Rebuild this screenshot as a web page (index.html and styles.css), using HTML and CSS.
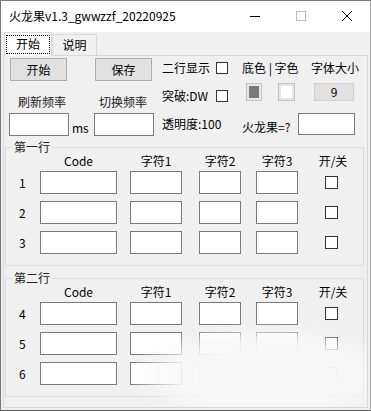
FILE: index.html
```html
<!DOCTYPE html>
<html lang="zh-CN">

<head>
    <meta charset="UTF-8">
    <title>火龙果v1.3_gwwzzf_20220925</title>
    <link rel="stylesheet" href="styles.css">
</head>

<body>

    <div class="window">
        <!-- Title bar -->
        <div class="titlebar">
            <span class="title">火龙果v1.3_gwwzzf_20220925</span>
            <div class="controls">
                <span class="ctl"><svg width="10" height="10" viewBox="0 0 10 10"><path d="M0 5.5h10" stroke="#000" stroke-width="1"/></svg></span>
                <span class="ctl"><svg width="10" height="10" viewBox="0 0 10 10"><rect x="0.5" y="0.5" width="9" height="9" fill="none" stroke="#bbb" stroke-width="1"/></svg></span>
                <span class="ctl"><svg width="10" height="10" viewBox="0 0 10 10"><path d="M0 0L10 10M10 0L0 10" stroke="#000" stroke-width="1"/></svg></span>
            </div>
        </div>

        <!-- Tabs -->
        <div class="tabs">
            <div class="tab active"><span class="focus">开始</span></div>
            <div class="tab">说明</div>
        </div>

        <div class="page">
            <div class="top">
                <div class="left">
                    <button class="btn b1">开始</button>
                    <button class="btn b2">保存</button>
                    <span class="cap c1">刷新频率</span>
                    <span class="cap c2">切换频率</span>
                    <input class="box i1" type="text">
                    <span class="ms">ms</span>
                    <input class="box i2" type="text">
                </div>

                <div class="mid">
                    <div class="opt"><span>二行显示</span><span class="check"></span></div>
                    <div class="opt"><span>突破:DW</span><span class="check"></span></div>
                    <div class="opt"><span>透明度:100</span></div>
                </div>

                <div class="right">
                    <div class="rrow head">
                        <span class="colors">底色 | 字色</span>
                        <span>字体大小</span>
                    </div>
                    <div class="rrow swatches">
                        <span class="swatch grey"></span>
                        <span class="swatch white"></span>
                        <button class="btn size">9</button>
                    </div>
                    <div class="rrow ask">
                        <span class="ask-label">火龙果=?</span>
                        <input class="box ask-input" type="text">
                    </div>
                </div>
            </div>

            <!-- Row groups -->
            <fieldset class="group first">
                <legend>第一行</legend>
                <div class="grid">
                    <span></span>
                    <span class="hd code">Code</span>
                    <span class="hd s1">字符1</span>
                    <span class="hd s2">字符2</span>
                    <span class="hd s3">字符3</span>
                    <span class="hd sw">开/关</span>

                    <span class="num">1</span>
                    <input class="box code" type="text"><input class="box s1" type="text"><input class="box s2" type="text"><input class="box s3" type="text"><span class="check sw"></span>

                    <span class="num">2</span>
                    <input class="box code" type="text"><input class="box s1" type="text"><input class="box s2" type="text"><input class="box s3" type="text"><span class="check sw"></span>

                    <span class="num">3</span>
                    <input class="box code" type="text"><input class="box s1" type="text"><input class="box s2" type="text"><input class="box s3" type="text"><span class="check sw"></span>
                </div>
            </fieldset>

            <fieldset class="group second">
                <legend>第二行</legend>
                <div class="grid">
                    <span></span>
                    <span class="hd code">Code</span>
                    <span class="hd s1">字符1</span>
                    <span class="hd s2">字符2</span>
                    <span class="hd s3">字符3</span>
                    <span class="hd sw">开/关</span>

                    <span class="num">4</span>
                    <input class="box code" type="text"><input class="box s1" type="text"><input class="box s2" type="text"><input class="box s3" type="text"><span class="check sw"></span>

                    <span class="num">5</span>
                    <input class="box code" type="text"><input class="box s1" type="text"><input class="box s2" type="text"><input class="box s3" type="text"><span class="check sw"></span>

                    <span class="num">6</span>
                    <input class="box code" type="text"><input class="box s1" type="text"><input class="box s2" type="text"><input class="box s3" type="text"><span class="check sw"></span>
                </div>
            </fieldset>

            <!-- washed-out spot over the lower right of the capture -->
            <div class="glare"></div>
        </div>
    </div>

</body>

</html>
```

FILE: styles.css
```css
/* Reset */
* {
    box-sizing: border-box;
    margin: 0;
    padding: 0;
}

body {
    width: 371px;
    height: 411px;
    background: #f0f0f0;
    font-family: "Noto Sans CJK SC", "Noto Sans", sans-serif;
    font-size: 12px;
    color: #000;
    overflow: hidden;
}

/* Window frame */
.window {
    display: flex;
    flex-direction: column;
    width: 371px;
    height: 411px;
    border: 1px solid #7a7a7a;
    border-right-color: #a8a8a8;
    border-bottom-color: #5a5a5a;
    background: #f0f0f0;
}

.titlebar {
    display: flex;
    align-items: center;
    height: 31px;
    background: #fff;
    padding-bottom: 1px;
}

.title {
    padding-left: 8px;
    font-size: 12px;
    line-height: 16px;
}

.controls {
    display: flex;
    margin-left: auto;
    height: 100%;
}

.ctl {
    display: flex;
    align-items: center;
    justify-content: center;
    width: 46px;
}

.ctl svg {
    display: block;
}

/* Tabs */
.tabs {
    display: flex;
    align-items: flex-end;
    height: 23px;
    padding-left: 3px;
    position: relative;
    z-index: 1;
}

.tab {
    display: flex;
    align-items: center;
    justify-content: center;
    width: 45px;
    height: 21px;
    border: 1px solid #d9d9d9;
    border-bottom: none;
    background: #f0f0f0;
    line-height: 16px;
}

.tab.active {
    width: 48px;
    height: 24px;
    margin-bottom: -1px;
    background: #fff;
    border-color: #d9d9d9;
}

.tab .focus {
    display: flex;
    align-items: center;
    justify-content: center;
    width: 44px;
    height: 19px;
    border: 1px dotted #000;
    margin-top: -1px;
}

/* Tab page */
.page {
    position: relative;
    flex: 1;
    margin: 0 2px 2px 2px;
    border: 1px solid #d9d9d9;
    display: flex;
    flex-direction: column;
    overflow: hidden;
}

.top {
    display: flex;
    padding: 2px 0 0 5px;
}

/* Left block: buttons, frequencies */
.left {
    display: grid;
    grid-template-columns: 60px 25px 60px;
    grid-template-rows: 23px 32px 23px;
}

.btn {
    font-family: inherit;
    font-size: 12px;
    line-height: 16px;
    background: #e1e1e1;
    border: 1px solid #adadad;
    color: #000;
}

.b1 {
    grid-column: 1;
    grid-row: 1;
    width: 57px;
    margin-left: 1px;
}

.b2 {
    grid-column: 3;
    grid-row: 1;
    width: 57px;
    margin-left: 1px;
}

.cap {
    grid-row: 2;
    align-self: end;
    line-height: 16px;
    margin-bottom: 3px;
    white-space: nowrap;
    color: #222;
}

.c1 {
    grid-column: 1;
    margin-left: 9px;
}

.c2 {
    grid-column: 3;
    margin-left: 5px;
}

.box {
    display: block;
    height: 23px;
    border: 1px solid #7a7a7a;
    background: #fff;
    outline: none;
}

.i1 {
    grid-column: 1;
    grid-row: 3;
    width: 60px;
}

.ms {
    grid-column: 2;
    grid-row: 3;
    align-self: end;
    line-height: 16px;
    padding-left: 3px;
}

.i2 {
    grid-column: 3;
    grid-row: 3;
    width: 60px;
}

/* Middle block: options */
.mid {
    display: flex;
    flex-direction: column;
    gap: 8px;
    margin-left: 8px;
}

.opt {
    display: flex;
    align-items: center;
    height: 20px;
    line-height: 16px;
    white-space: nowrap;
}

.opt span:first-child {
    width: 54px;
}

.check {
    display: block;
    width: 12px;
    height: 12px;
    border: 1px solid #333;
    background: #fff;
}

/* Right block: colours, font size */
.right {
    display: flex;
    flex-direction: column;
    margin-left: 14px;
}

.rrow {
    display: flex;
    white-space: nowrap;
}

.head {
    height: 20px;
    align-items: center;
    line-height: 16px;
}

.colors {
    width: 69px;
}

.swatches {
    height: 18px;
    margin-top: 5px;
}

.swatch {
    display: block;
    width: 16px;
    height: 18px;
    border: 1px solid #c4c4c4;
    box-shadow: inset 0 0 0 2px #e6e6e6;
}

.swatch.grey {
    margin-left: 4px;
    background: #7a7a7a;
}

.swatch.white {
    width: 17px;
    margin-left: 16px;
    background: #fff;
}

.btn.size {
    width: 40px;
    height: 18px;
    margin-left: 19px;
    border-color: #d0d0d0;
}

.ask {
    margin-top: 12px;
    align-items: flex-end;
}

.ask-label {
    width: 56px;
    line-height: 16px;
}

.ask-input {
    width: 57px;
    height: 22px;
}

/* Group boxes */
.group {
    width: 359px;
    margin-left: 1px;
    padding: 0 0 11px 1px;
    border: 1px solid #dcdcdc;
}

.group.first {
    margin-top: 4px;
}

.group.second {
    margin-top: 5px;
}

.group legend {
    margin-left: 5px;
    padding: 0 2px;
    line-height: 14px;
    color: #222;
}

.grid {
    display: grid;
    grid-template-columns: 33px 77px 65px 59px 57px 50px;
    grid-template-rows: 10px 23px 23px 23px;
    row-gap: 7px;
}

.hd {
    line-height: 14px;
    text-align: center;
    white-space: nowrap;
}

.num {
    padding-left: 12px;
    line-height: 23px;
}

.box.code {
    width: 77px;
}

.s1 {
    width: 52px;
    margin-left: 13px;
}

.s2 {
    width: 42px;
    margin-left: 17px;
}

.s3 {
    width: 42px;
    margin-left: 15px;
}

.hd.sw {
    width: 40px;
    margin-left: 15px;
}

.check.sw {
    width: 13px;
    height: 13px;
    margin: 5px 0 0 27px;
}

/* soft white wash in the lower right */
.glare {
    position: absolute;
    left: 120px;
    top: 268px;
    width: 250px;
    height: 92px;
    background: radial-gradient(ellipse 138px 54px at 142px 52px, rgba(247, 247, 247, 1) 45%, rgba(247, 247, 247, 0.85) 68%, rgba(247, 247, 247, 0) 100%);
    pointer-events: none;
}
```
